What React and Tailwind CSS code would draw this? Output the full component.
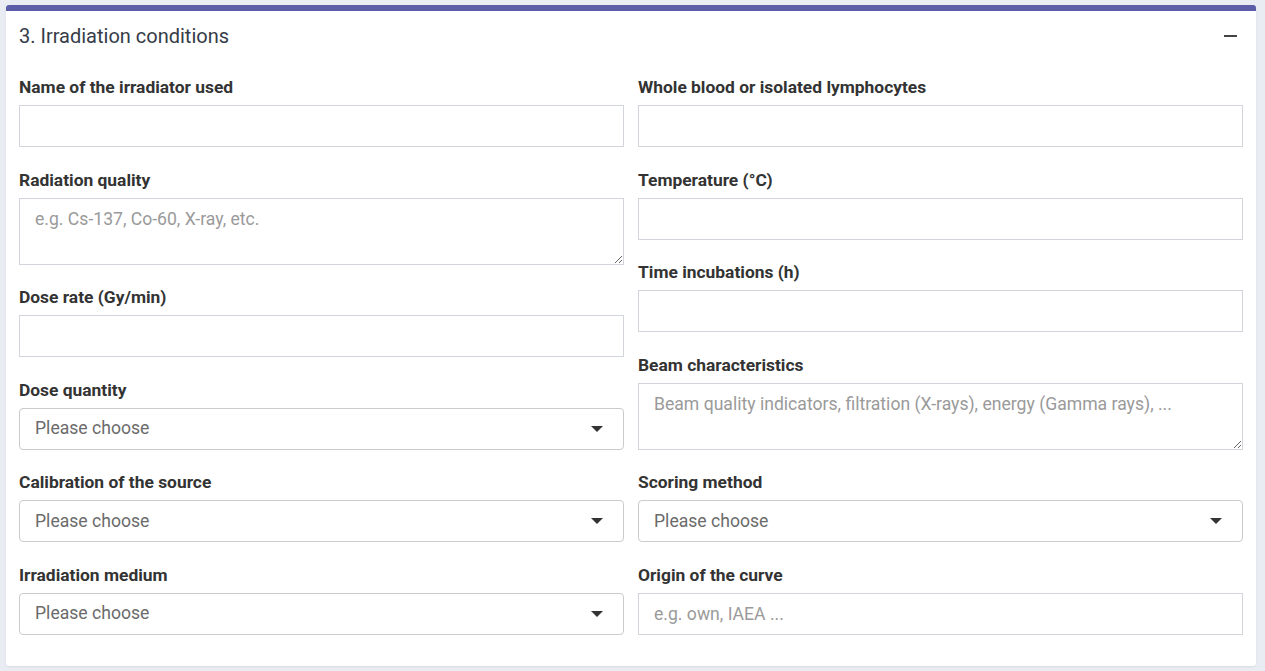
import { useState } from "react";

const FONT = { fontFamily: "Roboto, 'Noto Sans', 'Liberation Sans', sans-serif" };

const Label = ({ children }) => (
  <label className="block text-[17.4px] font-bold leading-6 text-[#333333] mb-[6px]">{children}</label>
);

const TextField = ({ label, placeholder = "" }) => (
  <div className="mb-[20.5px]">
    <Label>{label}</Label>
    <input
      type="text"
      placeholder={placeholder}
      className="block w-full h-[42px] border border-[#d3d5dc] bg-white px-[15px] text-[17.6px] text-[#333] placeholder:text-[#9a9a9a] outline-none"
    />
  </div>
);

const TextArea = ({ label, placeholder = "" }) => (
  <div className="mb-[20.5px]">
    <Label>{label}</Label>
    <textarea
      placeholder={placeholder}
      className="block w-full h-[67px] border border-[#d3d5dc] bg-white px-[15px] py-[8px] text-[17.6px] leading-6 text-[#333] placeholder:text-[#9a9a9a] outline-none resize-y"
    />
  </div>
);

const SelectField = ({ label }) => {
  const [value, setValue] = useState("");
  return (
    <div className="mb-[20.5px]">
      <Label>{label}</Label>
      <div className="relative">
        <select
          value={value}
          onChange={(e) => setValue(e.target.value)}
          className="block w-full h-[42px] appearance-none rounded-[4px] border border-[#cbcbcb] bg-white pl-[15px] pr-10 text-[17.6px] text-[#6b6b6b] outline-none"
        >
          <option value="">Please choose</option>
          <option value="a">Option A</option>
          <option value="b">Option B</option>
        </select>
        <svg
          className="pointer-events-none absolute right-[21px] top-1/2 -translate-y-1/2"
          width="12"
          height="6"
          viewBox="0 0 12 6"
        >
          <path d="M0 0h12L6 6z" fill="#333" />
        </svg>
      </div>
    </div>
  );
};

export default function App() {
  return (
    <div className="min-h-[671px] bg-[#e9ecf2] pt-[5px] pb-[5px] pl-[6px] pr-[9px]" style={FONT}>
      <div className="rounded-[3px] border-t-[6px] border-[#5b5ea7] bg-white shadow-[0_1px_2px_rgba(0,0,0,0.08)]">
        <div className="flex h-[50px] items-center justify-between px-[13px]">
          <h3 className="text-[20px] leading-6 text-[#363c48]">3. Irradiation conditions</h3>
          <button className="mr-[6px] flex h-6 w-[14px] items-center justify-center" aria-label="collapse">
            <span className="block h-[2px] w-[13px] bg-[#444]" />
          </button>
        </div>
        <div className="grid grid-cols-2 gap-x-[14px] px-[13px] pt-[14px] pb-[11px]">
          <div>
            <TextField label="Name of the irradiator used" />
            <TextArea label="Radiation quality" placeholder="e.g. Cs-137, Co-60, X-ray, etc." />
            <TextField label="Dose rate (Gy/min)" />
            <SelectField label="Dose quantity" />
            <SelectField label="Calibration of the source" />
            <SelectField label="Irradiation medium" />
          </div>
          <div>
            <TextField label="Whole blood or isolated lymphocytes" />
            <TextField label="Temperature (°C)" />
            <TextField label="Time incubations (h)" />
            <TextArea
              label="Beam characteristics"
              placeholder="Beam quality indicators, filtration (X-rays), energy (Gamma rays), ..."
            />
            <SelectField label="Scoring method" />
            <TextField label="Origin of the curve" placeholder="e.g. own, IAEA ..." />
          </div>
        </div>
      </div>
    </div>
  );
}
